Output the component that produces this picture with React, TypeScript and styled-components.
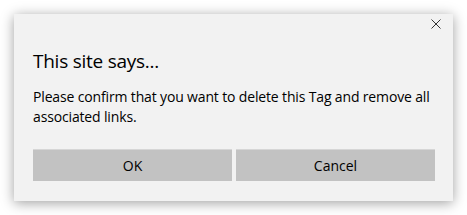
import * as React from "react";
import styled, { createGlobalStyle } from "styled-components";

const GlobalStyle = createGlobalStyle`
  html, body {
    margin: 0;
    padding: 0;
    background: #ffffff;
  }
  body {
    font-family: "Open Sans", "Noto Sans", sans-serif;
  }
`;

const Page = styled.div`
  width: 467px;
  height: 215px;
  box-sizing: border-box;
  padding: 14px 0 0 14px;
  overflow: hidden;
`;

const Dialog = styled.div`
  width: 439px;
  height: 187px;
  box-sizing: border-box;
  background: #f2f2f2;
  box-shadow: 0 2px 12px rgba(0, 0, 0, 0.38);
  padding: 0 18px 20px 19px;
  display: flex;
  flex-direction: column;
  color: #000;
`;

const TopBar = styled.div`
  height: 33px;
  display: flex;
  justify-content: flex-end;
  align-items: flex-start;
  margin-right: -6px;
`;

const CloseButton = styled.button`
  border: none;
  background: none;
  padding: 0;
  margin-top: 5px;
  width: 10px;
  height: 10px;
  display: flex;
  cursor: pointer;
`;

const Title = styled.h1`
  margin: 0;
  font-size: 19px;
  line-height: 28px;
  font-weight: 400;
  letter-spacing: -0.25px;
`;

const Message = styled.p`
  margin: 12px -4px 0 0;
  font-size: 14px;
  line-height: 20px;
  letter-spacing: -0.15px;
`;

const Buttons = styled.div`
  margin-top: auto;
  display: grid;
  grid-template-columns: 1fr 1fr;
  gap: 4px;
`;

const Button = styled.button`
  height: 32px;
  border: none;
  border-top: 1px solid #d6d6d6;
  background: #c2c2c2;
  font-family: inherit;
  font-size: 14px;
  color: #000;
  padding: 0;
`;

export default function App() {
  return (
    <Page>
      <GlobalStyle />
      <Dialog>
        <TopBar>
          <CloseButton aria-label="Close">
            <svg width="10" height="10" viewBox="0 0 10 10">
              <path d="M0.5 0.5 L9.5 9.5 M9.5 0.5 L0.5 9.5" stroke="#333" strokeWidth="1" />
            </svg>
          </CloseButton>
        </TopBar>
        <Title>This site says...</Title>
        <Message>
          Please confirm that you want to delete this Tag and remove all associated links.
        </Message>
        <Buttons>
          <Button>OK</Button>
          <Button>Cancel</Button>
        </Buttons>
      </Dialog>
    </Page>
  );
}
